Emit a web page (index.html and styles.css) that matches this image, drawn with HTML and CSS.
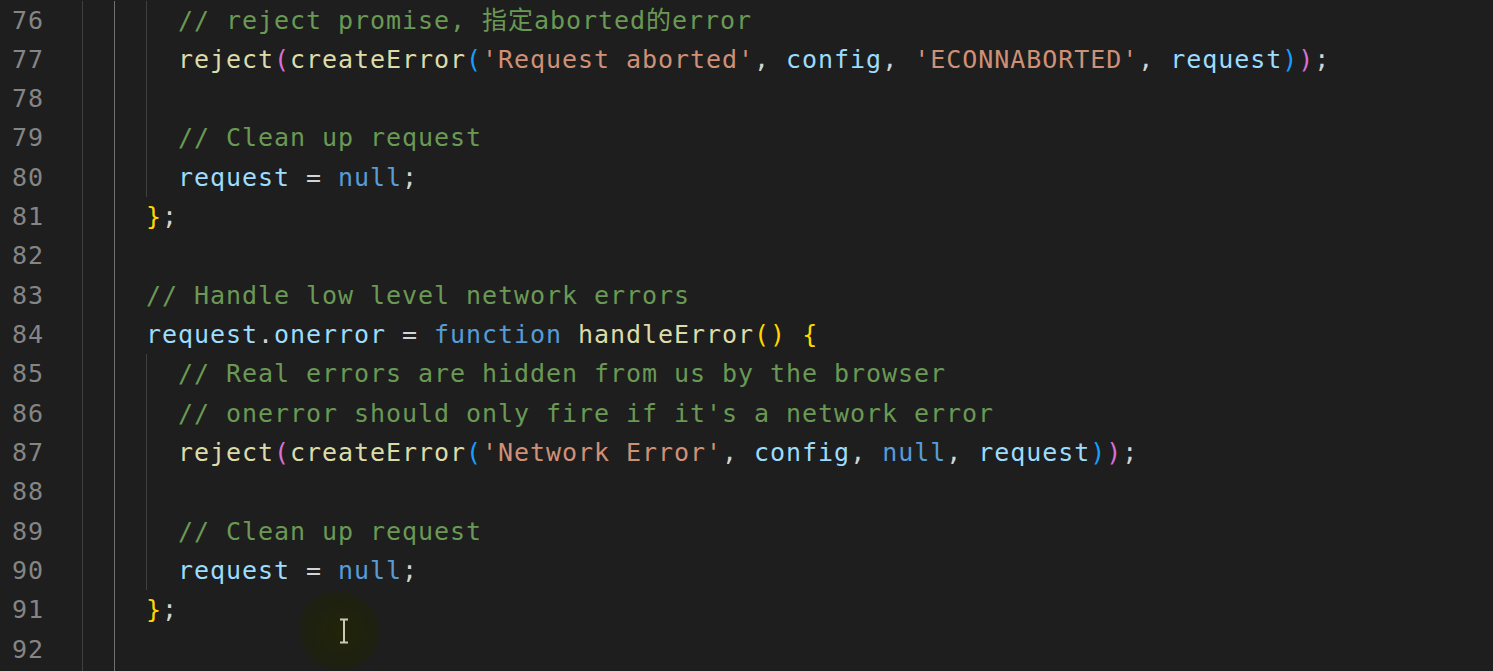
FILE: index.html
```html
<!DOCTYPE html>
<html lang="en">
<head>
<meta charset="utf-8">
<title>editor</title>
<link rel="stylesheet" href="styles.css">
</head>
<body>
<main class="editor">
  <div class="gutter">
    <div class="ln">76</div><div class="ln">77</div><div class="ln">78</div><div class="ln">79</div>
    <div class="ln">80</div><div class="ln">81</div><div class="ln">82</div><div class="ln">83</div>
    <div class="ln">84</div><div class="ln">85</div><div class="ln">86</div><div class="ln">87</div>
    <div class="ln">88</div><div class="ln">89</div><div class="ln">90</div><div class="ln">91</div>
    <div class="ln">92</div>
  </div>
  <div class="code">
    <div class="line"><span class="g"></span><span class="g act"></span><span class="g"></span><span class="cm">// reject promise, 指定aborted的error</span></div>
    <div class="line"><span class="g"></span><span class="g act"></span><span class="g"></span><span class="fn">reject</span><span class="b2">(</span><span class="fn">createError</span><span class="b3">(</span><span class="str">'Request aborted'</span><span class="p">, </span><span class="var">config</span><span class="p">, </span><span class="str">'ECONNABORTED'</span><span class="p">, </span><span class="var">request</span><span class="b3">)</span><span class="b2">)</span><span class="p">;</span></div>
    <div class="line"><span class="g"></span><span class="g act"></span><span class="g"></span></div>
    <div class="line"><span class="g"></span><span class="g act"></span><span class="g"></span><span class="cm">// Clean up request</span></div>
    <div class="line"><span class="g"></span><span class="g act"></span><span class="g"></span><span class="var">request</span><span class="p"> = </span><span class="kw">null</span><span class="p">;</span></div>
    <div class="line"><span class="g"></span><span class="g act"></span><span class="b1">}</span><span class="p">;</span></div>
    <div class="line"><span class="g"></span><span class="g act"></span></div>
    <div class="line"><span class="g"></span><span class="g act"></span><span class="cm">// Handle low level network errors</span></div>
    <div class="line"><span class="g"></span><span class="g act"></span><span class="var">request</span><span class="p">.</span><span class="var">onerror</span><span class="p"> = </span><span class="kw">function</span><span class="p"> </span><span class="fn">handleError</span><span class="b1">()</span><span class="p"> </span><span class="b1">{</span></div>
    <div class="line"><span class="g"></span><span class="g act"></span><span class="g"></span><span class="cm">// Real errors are hidden from us by the browser</span></div>
    <div class="line"><span class="g"></span><span class="g act"></span><span class="g"></span><span class="cm">// onerror should only fire if it's a network error</span></div>
    <div class="line"><span class="g"></span><span class="g act"></span><span class="g"></span><span class="fn">reject</span><span class="b2">(</span><span class="fn">createError</span><span class="b3">(</span><span class="str">'Network Error'</span><span class="p">, </span><span class="var">config</span><span class="p">, </span><span class="kw">null</span><span class="p">, </span><span class="var">request</span><span class="b3">)</span><span class="b2">)</span><span class="p">;</span></div>
    <div class="line"><span class="g"></span><span class="g act"></span><span class="g"></span></div>
    <div class="line"><span class="g"></span><span class="g act"></span><span class="g"></span><span class="cm">// Clean up request</span></div>
    <div class="line"><span class="g"></span><span class="g act"></span><span class="g"></span><span class="var">request</span><span class="p"> = </span><span class="kw">null</span><span class="p">;</span></div>
    <div class="line"><span class="g"></span><span class="g act"></span><span class="b1">}</span><span class="p">;</span></div>
    <div class="line"><span class="g"></span><span class="g act"></span></div>
    <div class="line tail"><span class="g"></span><span class="g act"></span></div>
  </div>
  <div class="halo"></div>
  <svg class="ibeam" width="10" height="26" viewBox="0 0 10 26" aria-hidden="true">
    <path d="M1 1.5h8M1 24.5h8M5 1.5v23" stroke="#c9cbb5" stroke-width="2" fill="none"/>
  </svg>
</main>
</body>
</html>
```
FILE: styles.css
```css
html, body {
  margin: 0;
  padding: 0;
  background: #1e1e1e;
  overflow: hidden;
  height: 100%;
}

.editor {
  position: relative;
  display: flex;
  margin-top: 0.5px;
  font-family: "DejaVu Sans Mono", "Noto Sans CJK SC", monospace;
  font-size: 25px;
  letter-spacing: 0.95px;
  line-height: 39.33px;
  color: #d4d4d4;
}

.gutter {
  width: 44px;
  flex: none;
  text-align: right;
  color: #858585;
}

.ln {
  height: 39.33px;
}

.code {
  margin-left: 38px;
  flex: 1;
}

.line {
  height: 39.33px;
  white-space: pre;
}

.line.tail {
  height: 10px;
}

.g {
  display: inline-block;
  width: 32px;
  height: 39.33px;
  vertical-align: top;
  box-sizing: border-box;
  border-left: 1px solid #404040;
}

.line.tail .g {
  height: 10px;
}

.g.act {
  border-left-color: #707070;
}

.cm { color: #6a9955; }
.fn { color: #dcdcaa; }
.str { color: #ce9178; }
.var { color: #9cdcfe; }
.kw { color: #569cd6; }
.p { color: #d4d4d4; }
.b1 { color: #ffd700; }
.b2 { color: #da70d6; }
.b3 { color: #179fff; }

.halo {
  position: absolute;
  left: 300px;
  top: 590px;
  width: 80px;
  height: 80px;
  border-radius: 46% 54% 50% 50%;
  background: radial-gradient(circle, rgba(34, 38, 4, 0.8) 0%, rgba(30, 34, 6, 0.6) 55%, rgba(30, 30, 30, 0) 100%);
}

.ibeam {
  position: absolute;
  left: 339px;
  top: 617px;
}
```
